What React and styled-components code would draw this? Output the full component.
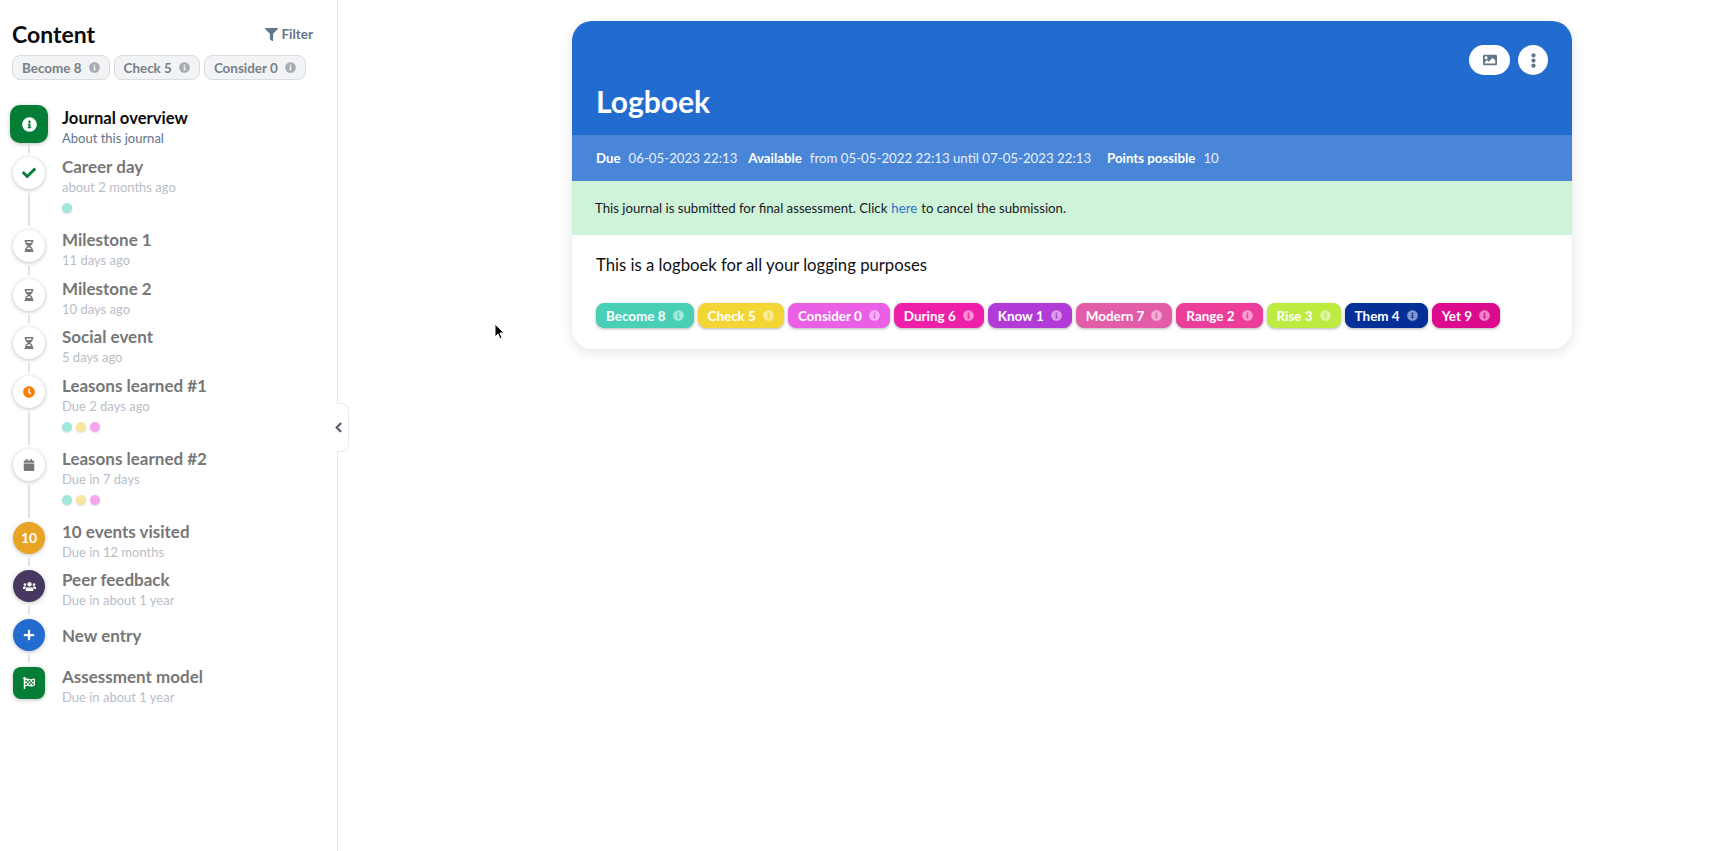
import React from "react";
import styled, { createGlobalStyle } from "styled-components";
import {
  FaCalendar,
  FaCheck,
  FaChevronLeft,
  FaClock,
  FaEllipsisV,
  FaFilter,
  FaFlagCheckered,
  FaHourglassHalf,
  FaImage,
  FaInfoCircle,
  FaPlus,
  FaUsers,
} from "react-icons/fa";

const font = `Lato, "Open Sans", "Liberation Sans", sans-serif`;

const GlobalStyle = createGlobalStyle`
  html, body { margin: 0; padding: 0; background: #fff; }
  body { font-family: ${font}; overflow: hidden; }
  * { box-sizing: border-box; }
`;

const chips = [
  { name: "Become 8", color: "#48cfb6" },
  { name: "Check 5", color: "#f3d636" },
  { name: "Consider 0", color: "#ea5fe6" },
  { name: "During 6", color: "#ee1fa8" },
  { name: "Know 1", color: "#b23bd8" },
  { name: "Modern 7", color: "#e35ca8" },
  { name: "Range 2", color: "#ec3d9b" },
  { name: "Rise 3", color: "#bdeb3f" },
  { name: "Them 4", color: "#042f96" },
  { name: "Yet 9", color: "#dc0a8c" },
];

const entries = [
  { title: "Career day", sub: "about 2 months ago", icon: <FaCheck size={14} color="#047d37" />, dots: 1 },
  { title: "Milestone 1", sub: "11 days ago", icon: <FaHourglassHalf size={12} color="#777" /> },
  { title: "Milestone 2", sub: "10 days ago", icon: <FaHourglassHalf size={12} color="#777" /> },
  { title: "Social event", sub: "5 days ago", icon: <FaHourglassHalf size={12} color="#777" /> },
  { title: "Leasons learned #1", sub: "Due 2 days ago", icon: <FaClock size={12} color="#f97f00" />, dots: 3 },
  { title: "Leasons learned #2", sub: "Due in 7 days", icon: <FaCalendar size={12} color="#777" />, dots: 3 },
  { title: "10 events visited", sub: "Due in 12 months", icon: "10", bg: "#e8a422" },
  { title: "Peer feedback", sub: "Due in about 1 year", icon: <FaUsers size={13} color="#fff" />, bg: "#46385f" },
  { title: "New entry", icon: <FaPlus size={12} color="#fff" />, bg: "#226bcf" },
  { title: "Assessment model", sub: "Due in about 1 year", icon: <FaFlagCheckered size={12} color="#fff" />, bg: "#047d37", square: true, last: true },
];

const Page = styled.div`
  display: flex;
  height: 100vh;
  position: relative;
`;

const Sidebar = styled.aside`
  position: relative;
  flex: 0 0 338px;
  border-right: 1px solid #e2e6ea;
  padding: 20px 0 0 12px;
`;

const SideHead = styled.div`
  display: flex;
  align-items: center;
  justify-content: space-between;
  height: 28px;
  padding-right: 24px;
`;

const SideTitle = styled.h2`
  margin: 0;
  font-size: 23px;
  line-height: 28px;
  font-weight: 700;
  color: #0b0b0b;
`;

const FilterButton = styled.button`
  display: flex;
  align-items: center;
  gap: 3px;
  padding: 0;
  border: 0;
  background: none;
  font: 700 13.5px ${font};
  color: #64748b;
`;

const ChipRow = styled.div`
  display: flex;
  gap: 4px;
  margin-top: 7px;
`;

const Chip = styled.span`
  display: inline-flex;
  align-items: center;
  justify-content: space-between;
  gap: 7px;
  height: 25px;
  padding: 0 9px;
  border-radius: 8px;
  font-size: 13.45px;
  font-weight: 700;
  white-space: nowrap;
  color: ${(p) => (p.$color ? "#fff" : "#7a7f87")};
  background: ${(p) => p.$color || "#f1f3f5"};
  border: 1px solid ${(p) => p.$color || "#d9dde2"};
  box-shadow: ${(p) => (p.$color ? "0 1px 3px rgba(0,0,0,.3)" : "none")};

  svg {
    flex: none;
    color: ${(p) => (p.$color ? "rgba(255,255,255,.5)" : "#a8acb2")};
  }
`;

const Timeline = styled.div`
  margin-top: 25px;
  padding-left: 1px;
`;

const Row = styled.div`
  display: flex;
  height: ${(p) => p.$height}px;
`;

const Rail = styled.div`
  flex: 0 0 32px;
  min-width: 0;
  display: flex;
  flex-direction: column;
  align-items: center;
`;

const Badge = styled.div`
  flex: none;
  display: flex;
  align-items: center;
  justify-content: center;
  width: ${(p) => (p.$active ? 38 : 32)}px;
  height: ${(p) => (p.$active ? 38 : 32)}px;
  border-radius: ${(p) => (p.$active ? "10px" : p.$square ? "8px" : "50%")};
  background: ${(p) => p.$bg || "#fff"};
  box-shadow: 0 1px 4px rgba(0, 0, 0, 0.25);
  font-size: 14px;
  font-weight: 700;
  color: #fff;
`;

const Connector = styled.div`
  flex: 1;
  width: 2px;
  margin: ${(p) => (p.$active ? "0 0 4px" : "4px 0")};
  background: #dfe3e8;
`;

const Body = styled.div`
  margin-left: 17px;
  padding-top: ${(p) => (p.$active ? 3 : 0)}px;
  display: ${(p) => (p.$center ? "flex" : "block")};
  align-items: center;
  height: ${(p) => (p.$center ? "34px" : "auto")};
`;

const EntryTitle = styled.div`
  font-size: ${(p) => (p.$active ? 16.6 : 17)}px;
  line-height: 20px;
  font-weight: 700;
  color: ${(p) => (p.$active ? "#0b0b0b" : "#777")};
`;

const EntrySub = styled.div`
  font-size: 13px;
  line-height: 20px;
  color: ${(p) => (p.$active ? "#64748b" : "#b9bdc7")};
`;

const Dots = styled.div`
  display: flex;
  gap: 4px;
  margin-top: 6px;
`;

const Dot = styled.span`
  width: 10px;
  height: 10px;
  border-radius: 50%;
  background: ${(p) => p.$color};
  box-shadow: 0 1px 2px rgba(0, 0, 0, 0.15);
`;

const Collapse = styled.button`
  position: absolute;
  top: 403px;
  left: 337px;
  display: flex;
  align-items: center;
  width: 12px;
  height: 49px;
  padding: 0;
  border: 1px solid #e8ebee;
  border-left: 0;
  border-radius: 0 8px 8px 0;
  background: #fff;
  color: #555b63;

  svg {
    flex: none;
    margin-left: -4px;
    stroke: currentColor;
    stroke-width: 30;
  }
`;

const Main = styled.main`
  flex: 1;
  padding: 21px 0 0 234px;
`;

const Card = styled.section`
  width: 1000px;
  border-radius: 20px;
  overflow: hidden;
  background: #fff;
  box-shadow: 0 3px 12px rgba(30, 41, 80, 0.13);
`;

const Banner = styled.header`
  display: flex;
  align-items: flex-end;
  justify-content: space-between;
  height: 114px;
  padding: 24px 24px 17px;
  background: #226bcf;
`;

const CardTitle = styled.h1`
  margin: 0;
  font-size: 30px;
  line-height: 34px;
  font-weight: 700;
  color: #fff;
`;

const Actions = styled.div`
  align-self: flex-start;
  display: flex;
  gap: 8px;
`;

const RoundButton = styled.button`
  display: flex;
  align-items: center;
  justify-content: center;
  width: ${(p) => (p.$wide ? 41 : 30)}px;
  height: 30px;
  padding: 0;
  border: 0;
  border-radius: 15px;
  background: #fff;
  color: #64748b;
`;

const InfoBar = styled.div`
  display: flex;
  align-items: center;
  gap: 11px;
  height: 46px;
  padding: 0 24px;
  background: #4a86d7;
  font-size: 13.25px;
  color: #e8f0fb;
`;

const InfoItem = styled.span`
  display: flex;
  gap: 8px;

  b {
    font-weight: 700;
    color: #fff;
  }

  &:last-child {
    margin-left: 5px;
  }
`;

const Notice = styled.div`
  display: flex;
  align-items: center;
  gap: 4px;
  height: 54px;
  padding: 0 23px;
  background: #cff3d8;
  font-size: 13.2px;
  color: #16181d;

  a {
    color: #2a6fd0;
  }
`;

const Description = styled.p`
  margin: 0;
  padding: 19px 24px 0;
  font-size: 16.7px;
  line-height: 22px;
  color: #111;
`;

const TagRow = styled.div`
  display: flex;
  gap: 4px;
  padding: 27px 24px 21px;
`;

const MouseCursor = styled.svg`
  position: absolute;
  top: 323px;
  left: 494px;
`;

function Entry({ entry }) {
  const height = entry.dots ? 73 : 48.5;
  return (
    <Row $height={height}>
      <Rail>
        <Badge $bg={entry.bg} $square={entry.square}>{entry.icon}</Badge>
        {!entry.last && <Connector />}
      </Rail>
      <Body $center={!entry.sub}>
        <div>
          <EntryTitle>{entry.title}</EntryTitle>
          {entry.sub && <EntrySub>{entry.sub}</EntrySub>}
          {entry.dots > 0 && (
            <Dots>
              {["#9fe8da", "#f7e79c", "#f4a5ee"].slice(0, entry.dots).map((c) => (
                <Dot key={c} $color={c} />
              ))}
            </Dots>
          )}
        </div>
      </Body>
    </Row>
  );
}

export default function App() {
  return (
    <Page>
      <GlobalStyle />
      <Sidebar>
        <SideHead>
          <SideTitle>Content</SideTitle>
          <FilterButton>
            <FaFilter size={13} />
            Filter
          </FilterButton>
        </SideHead>
        <ChipRow>
          {chips.slice(0, 3).map((chip) => (
            <Chip key={chip.name}>
              {chip.name}
              <FaInfoCircle size={11} />
            </Chip>
          ))}
        </ChipRow>
        <Timeline>
          <Row $height={52}>
            <Rail>
              <Badge $active $bg="#047d37">
                <FaInfoCircle size={15} color="#fff" />
              </Badge>
              <Connector $active />
            </Rail>
            <Body $active>
              <EntryTitle $active>Journal overview</EntryTitle>
              <EntrySub $active>About this journal</EntrySub>
            </Body>
          </Row>
          {entries.map((entry) => (
            <Entry key={entry.title} entry={entry} />
          ))}
        </Timeline>
      </Sidebar>
      <Collapse aria-label="Collapse">
        <FaChevronLeft size={11} />
      </Collapse>
      <Main>
        <Card>
          <Banner>
            <CardTitle>Logboek</CardTitle>
            <Actions>
              <RoundButton $wide>
                <FaImage size={14} />
              </RoundButton>
              <RoundButton>
                <FaEllipsisV size={15} />
              </RoundButton>
            </Actions>
          </Banner>
          <InfoBar>
            <InfoItem>
              <b>Due</b> 06-05-2023 22:13
            </InfoItem>
            <InfoItem>
              <b>Available</b> from 05-05-2022 22:13 until 07-05-2023 22:13
            </InfoItem>
            <InfoItem>
              <b>Points possible</b> 10
            </InfoItem>
          </InfoBar>
          <Notice>
            This journal is submitted for final assessment. Click <a>here</a> to cancel the submission.
          </Notice>
          <Description>This is a logboek for all your logging purposes</Description>
          <TagRow>
            {chips.map((chip) => (
              <Chip key={chip.name} $color={chip.color}>
                {chip.name}
                <FaInfoCircle size={11} />
              </Chip>
            ))}
          </TagRow>
        </Card>
      </Main>
      <MouseCursor width="12" height="18" viewBox="0 0 12 18">
        <path d="M1 1v13l3-3 2 5 2-1-2-5h4z" fill="#000" stroke="#fff" strokeWidth="1" />
      </MouseCursor>
    </Page>
  );
}
